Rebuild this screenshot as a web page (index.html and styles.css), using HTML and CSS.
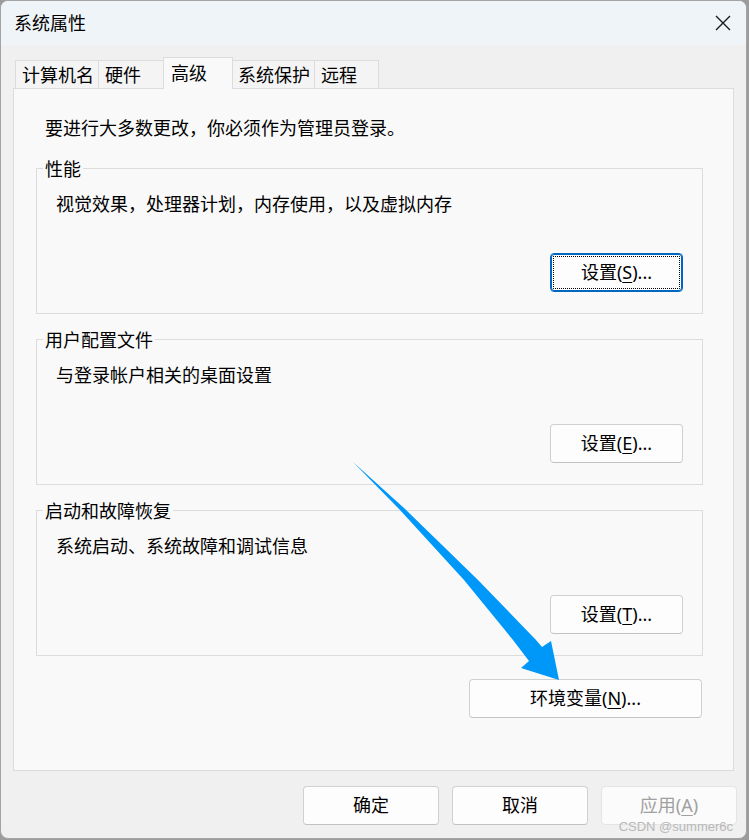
FILE: index.html
```html
<!DOCTYPE html>
<html lang="zh-CN">
<head>
    <meta charset="UTF-8">
    <meta name="viewport" content="width=device-width, initial-scale=1.0">
    <title>系统属性</title>
    <link rel="stylesheet" href="styles.css">
</head>
<body>
    <div class="window">
        <div class="titlebar">
            <span class="title">系统属性</span>
            <svg class="close" width="16" height="16" viewBox="0 0 16 16">
                <path d="M1 1 L15 15 M15 1 L1 15" stroke="#1a1a1a" stroke-width="1.4" fill="none"/>
            </svg>
        </div>

        <!-- 탭 -->
        <div class="tabs">
            <div class="tab tab_name">计算机名</div>
            <div class="tab tab_hw">硬件</div>
            <div class="tab tab_active">高级</div>
            <div class="tab tab_protect">系统保护</div>
            <div class="tab tab_remote">远程</div>
        </div>

        <div class="panel">
            <p class="intro">要进行大多数更改，你必须作为管理员登录。</p>

            <div class="group">
                <div class="group_title">性能</div>
                <p class="group_text">视觉效果，处理器计划，内存使用，以及虚拟内存</p>
                <div class="group_actions">
                    <button class="btn btn_set btn_focus">设置(<u>S</u>)...</button>
                </div>
            </div>

            <div class="group">
                <div class="group_title">用户配置文件</div>
                <p class="group_text">与登录帐户相关的桌面设置</p>
                <div class="group_actions">
                    <button class="btn btn_set">设置(<u>E</u>)...</button>
                </div>
            </div>

            <div class="group">
                <div class="group_title">启动和故障恢复</div>
                <p class="group_text">系统启动、系统故障和调试信息</p>
                <div class="group_actions">
                    <button class="btn btn_set">设置(<u>T</u>)...</button>
                </div>
            </div>

            <div class="env_row">
                <button class="btn btn_env">环境变量(<u>N</u>)...</button>
            </div>
        </div>

        <div class="actions">
            <button class="btn btn_dlg">确定</button>
            <button class="btn btn_dlg">取消</button>
            <button class="btn btn_dlg btn_disabled">应用(<u>A</u>)</button>
        </div>

        <div class="watermark">CSDN @summer6c</div>
    </div>

    <!-- 화살표 -->
    <svg class="arrow" width="749" height="840" viewBox="0 0 749 840">
        <polygon fill="#0098f8"
            points="353,462 404,508 478,580 536,640 542,647 551,641 559,680 521,668 529,661 513,640 464,580 400,510"/>
    </svg>
</body>
</html>
```

FILE: styles.css
```css
/* 시스템 속성 창 */
body {
    margin: 0;
    width: 749px;
    height: 840px;
    overflow: hidden;
    background-color: #9c9c9c;
    font-family: "Noto Sans", "Noto Sans CJK SC", sans-serif;
    color: #000;
    position: relative;
}
.window {
    position: relative;
    box-sizing: border-box;
    width: 747px;
    height: 839px;
    border: 1px solid #a3a3a3;
    border-radius: 8px;
    overflow: hidden;
    background-color: #f0f0f0;
}
.titlebar {
    height: 44px;
    background-color: #eff4f9;
    display: flex;
    align-items: center;
    justify-content: space-between;
    padding: 0 15px 0 13px;
}
.title {
    font-size: 18px;
    line-height: 44px;
}
.close {
    display: block;
}

/* 탭 */
.tabs {
    display: flex;
    align-items: flex-end;
    height: 31px;
    margin: 12px 0 0 14px;
}
.tab {
    box-sizing: border-box;
    height: 28px;
    border: 1px solid #dcdcdc;
    border-bottom: 0;
    background-color: #f4f4f4;
    padding: 1px 0 0 6px;
    font-size: 18px;
    line-height: 27px;
    margin-left: -1px;
}
.tab_name { width: 84px; margin-left: 0; }
.tab_hw { width: 66px; }
.tab_protect { width: 83px; padding-left: 5px; }
.tab_remote { width: 65px; }
.tab_active {
    position: relative;
    z-index: 1;
    width: 70px;
    height: 32px;
    margin-bottom: -1px;
    padding: 0 0 0 7px;
    line-height: 30px;
    background-color: #f9f9f9;
}

.panel {
    box-sizing: border-box;
    width: 721px;
    height: 683px;
    margin-left: 12px;
    border: 1px solid #dcdcdc;
    background-color: #f9f9f9;
    padding: 27px 0 0 22px;
}
.intro {
    margin: 0;
    padding-left: 9px;
    font-size: 18px;
    line-height: 24px;
}

/* 그룹 박스 */
.group {
    box-sizing: border-box;
    width: 667px;
    margin-top: 25px;
    border: 1px solid #dcdcdc;
    padding: 0 19px 21px 19px;
}
.intro + .group {
    margin-top: 28px;
}
.group_title {
    width: fit-content;
    margin: -12px 0 0 -13px;
    padding: 0 2px;
    background-color: #f9f9f9;
    font-size: 18px;
    line-height: 24px;
}
.group_text {
    margin: 11px 0 0 0;
    font-size: 18px;
    line-height: 24px;
}
.group_actions {
    display: flex;
    justify-content: flex-end;
    margin-top: 37px;
}

/* 버튼 */
.btn {
    box-sizing: border-box;
    height: 39px;
    border: 1px solid #d0d0d0;
    border-bottom-color: #c2c2c2;
    border-radius: 4px;
    background-color: #fdfdfd;
    font-family: inherit;
    font-size: 18px;
    color: #000;
    padding: 0;
    line-height: 37px;
}
.btn u {
    text-underline-offset: 3px;
}
.btn_set { width: 133px; }
.btn_focus {
    border-color: #0067c0;
    box-shadow: inset 0 0 0 1px #0067c0;
    outline: 1px dotted #000;
    outline-offset: -4px;
}
.env_row {
    width: 666px;
    display: flex;
    justify-content: flex-end;
    margin-top: 23px;
}
.btn_env { width: 233px; }

.actions {
    display: flex;
    justify-content: flex-end;
    gap: 13px;
    margin-top: 15px;
    padding-right: 9px;
}
.btn_dlg { width: 136px; }
.btn_disabled {
    color: #a0a0a0;
    background-color: #fbfbfb;
    border-color: #e4e4e4;
}

.watermark {
    position: absolute;
    right: 13px;
    top: 818px;
    font-family: "Liberation Sans", sans-serif;
    font-size: 13px;
    line-height: 16px;
    color: #b8b8b8;
}

.arrow {
    position: absolute;
    top: 0;
    left: 0;
    z-index: 2;
    pointer-events: none;
}
```
